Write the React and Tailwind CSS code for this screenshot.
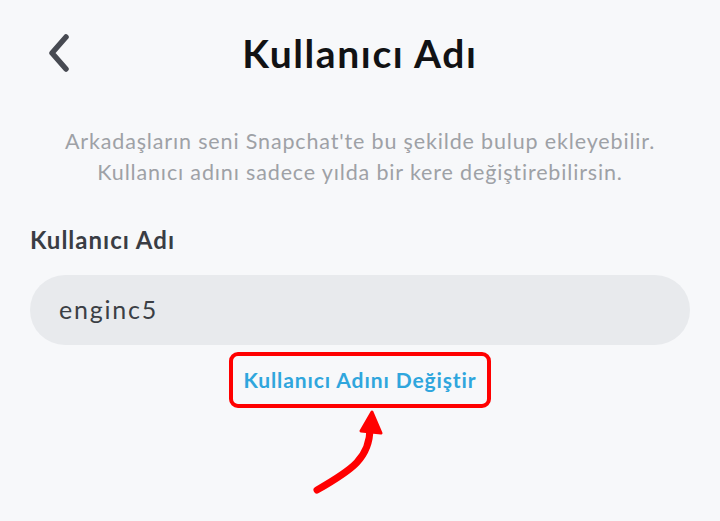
export default function App() {
  return (
    <div className="relative w-[720px] h-[521px] overflow-hidden bg-[#f7f8fa] font-['Lato','Noto_Sans',sans-serif]">
      <header className="grid grid-cols-[1fr_auto_1fr] items-center h-[106px]">
        <div className="pl-[46px] flex items-center">
          <svg width="26" height="38" viewBox="0 0 26 38" fill="none">
            <path d="M20 3 L6 19 L20 35" stroke="#474a52" strokeWidth="5.5" strokeLinecap="round" strokeLinejoin="round" />
          </svg>
        </div>
        <h1 className="text-[39px] font-bold text-[#111214] leading-none tracking-[1.6px]">Kullanıcı Adı</h1>
        <div />
      </header>
      <p className="mt-[20px] text-center text-[21.5px] leading-[31px] tracking-[0.85px] text-[#9ea1a6]">
        Arkadaşların seni Snapchat'te bu şekilde bulup ekleyebilir.
        <br />
        Kullanıcı adını sadece yılda bir kere değiştirebilirsin.
      </p>
      <div className="px-[30px] mt-[37px]">
        <div className="text-[24px] font-bold leading-[30px] tracking-[1px] text-[#3a3d44]">Kullanıcı Adı</div>
        <div className="mt-[20px] h-[70px] rounded-full bg-[#e8eaed] flex items-center pl-[29px] text-[25px] tracking-[1.8px] text-[#3b3f45]">
          enginc5
        </div>
        <div className="mt-[7px] flex justify-center">
          <div className="w-[262px] h-[56px] rounded-[9px] border-[4px] border-[#ff0000] flex items-center justify-center text-[21px] font-bold tracking-[0.9px] text-[#2fa6dd]">
            Kullanıcı Adını Değiştir
          </div>
        </div>
      </div>
      <svg className="absolute left-0 top-0" width="720" height="521" viewBox="0 0 720 521" fill="none">
        <path d="M317 490 C 352 470, 370 458, 370 428" stroke="#ff0000" strokeWidth="7" strokeLinecap="round" />
        <path d="M372 412 L381 433 L361 431 Z" fill="#ff0000" stroke="#ff0000" strokeWidth="3" strokeLinejoin="round" />
      </svg>
    </div>
  );
}
